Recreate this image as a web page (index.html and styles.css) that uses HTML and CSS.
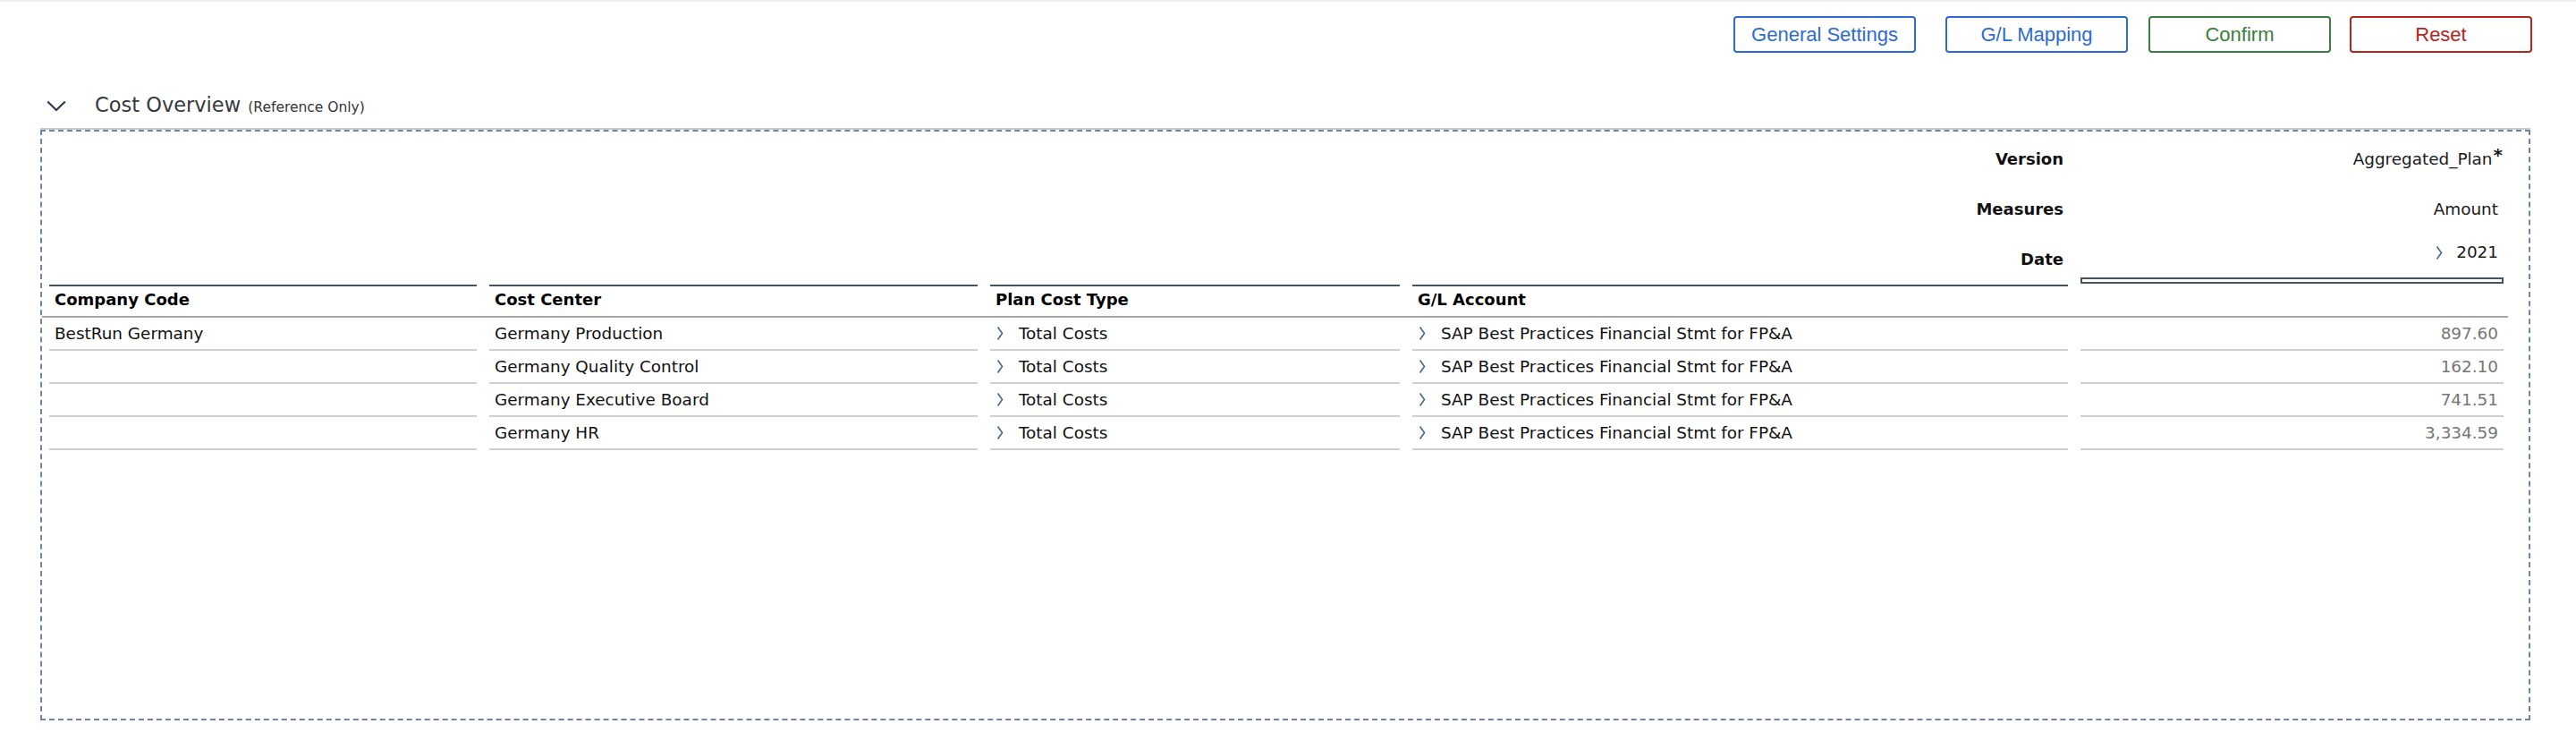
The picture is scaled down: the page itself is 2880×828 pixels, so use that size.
FILE: index.html
```html
<!DOCTYPE html>
<html lang="en">
<head>
<meta charset="utf-8">
<title>Cost Overview</title>
<link rel="stylesheet" href="styles.css">
</head>
<body>
<div class="topbar"></div>
<div class="toolbar">
  <button class="btn btn-blue">General Settings</button>
  <button class="btn btn-blue btn-gl">G/L Mapping</button>
  <button class="btn btn-green btn-confirm">Confirm</button>
  <button class="btn btn-red btn-reset">Reset</button>
</div>
<div class="titlebar">
  <svg class="collapse" width="22" height="13" viewBox="0 0 22 13"><polyline points="1.2,1.5 11,11 20.8,1.5" fill="none" stroke="#2f3b4c" stroke-width="2.2"/></svg>
  <div class="title">Cost Overview <span class="subtitle">(Reference Only)</span></div>
</div>
<div class="section">
  <div class="frame">
    <div class="grid">
      <div class="dimlabel">Version</div>
      <div class="dimvalue">Aggregated_Plan<span class="star">*</span></div>

      <div class="dimlabel">Measures</div>
      <div class="dimvalue">Amount</div>

      <div class="dimlabel">Date</div>
      <div class="datevalue">
        <div class="dateline"><svg class="chev" width="8" height="17" viewBox="0 0 8 17"><polyline points="1.5,1.5 6.5,8.5 1.5,15.5" fill="none" stroke="#46688f" stroke-width="1.6"/></svg><span class="year">2021</span></div>
        <div class="colbox"></div>
      </div>

      <div class="hcell">Company Code</div>
      <div class="hcell">Cost Center</div>
      <div class="hcell">Plan Cost Type</div>
      <div class="hcell">G/L Account</div>
      <div class="hcell hcell-empty"></div>
      <div class="hline"></div>

      <div class="cell">BestRun Germany</div>
      <div class="cell">Germany Production</div>
      <div class="cell"><svg class="chev" width="8" height="17" viewBox="0 0 8 17"><polyline points="1.5,1.5 6.5,8.5 1.5,15.5" fill="none" stroke="#46688f" stroke-width="1.6"/></svg>Total Costs</div>
      <div class="cell"><svg class="chev" width="8" height="17" viewBox="0 0 8 17"><polyline points="1.5,1.5 6.5,8.5 1.5,15.5" fill="none" stroke="#46688f" stroke-width="1.6"/></svg>SAP Best Practices Financial Stmt for FP&amp;A</div>
      <div class="cell num">897.60</div>

      <div class="cell"></div>
      <div class="cell">Germany Quality Control</div>
      <div class="cell"><svg class="chev" width="8" height="17" viewBox="0 0 8 17"><polyline points="1.5,1.5 6.5,8.5 1.5,15.5" fill="none" stroke="#46688f" stroke-width="1.6"/></svg>Total Costs</div>
      <div class="cell"><svg class="chev" width="8" height="17" viewBox="0 0 8 17"><polyline points="1.5,1.5 6.5,8.5 1.5,15.5" fill="none" stroke="#46688f" stroke-width="1.6"/></svg>SAP Best Practices Financial Stmt for FP&amp;A</div>
      <div class="cell num">162.10</div>

      <div class="cell"></div>
      <div class="cell">Germany Executive Board</div>
      <div class="cell"><svg class="chev" width="8" height="17" viewBox="0 0 8 17"><polyline points="1.5,1.5 6.5,8.5 1.5,15.5" fill="none" stroke="#46688f" stroke-width="1.6"/></svg>Total Costs</div>
      <div class="cell"><svg class="chev" width="8" height="17" viewBox="0 0 8 17"><polyline points="1.5,1.5 6.5,8.5 1.5,15.5" fill="none" stroke="#46688f" stroke-width="1.6"/></svg>SAP Best Practices Financial Stmt for FP&amp;A</div>
      <div class="cell num">741.51</div>

      <div class="cell"></div>
      <div class="cell">Germany HR</div>
      <div class="cell"><svg class="chev" width="8" height="17" viewBox="0 0 8 17"><polyline points="1.5,1.5 6.5,8.5 1.5,15.5" fill="none" stroke="#46688f" stroke-width="1.6"/></svg>Total Costs</div>
      <div class="cell"><svg class="chev" width="8" height="17" viewBox="0 0 8 17"><polyline points="1.5,1.5 6.5,8.5 1.5,15.5" fill="none" stroke="#46688f" stroke-width="1.6"/></svg>SAP Best Practices Financial Stmt for FP&amp;A</div>
      <div class="cell num">3,334.59</div>
    </div>
  </div>
</div>
</body>
</html>
```
FILE: styles.css
```css
* { box-sizing: border-box; }

html, body {
  margin: 0;
  padding: 0;
  background: #ffffff;
}

body {
  font-family: "DejaVu Sans", "Liberation Sans", sans-serif;
  color: #1a1a1a;
  width: 2880px;
  height: 828px;
  overflow: hidden;
}

.topbar {
  height: 2px;
  background: #f0f0f0;
}

.toolbar {
  display: flex;
  justify-content: flex-end;
  padding: 16px 49px 0 0;
}

.btn {
  width: 204px;
  height: 41px;
  padding: 0;
  border: 2px solid;
  border-radius: 4px;
  background: #ffffff;
  font-family: "Liberation Sans", Arial, sans-serif;
  font-size: 22px;
  line-height: 1;
  cursor: pointer;
}

.btn-blue { color: #2e6bcf; border-color: #2e6bcf; }
.btn-green { color: #3b7d41; border-color: #3b7d41; }
.btn-red { color: #b3261e; border-color: #b3261e; }

.btn-gl { margin-left: 33px; }
.btn-confirm { margin-left: 23px; }
.btn-reset { margin-left: 21px; }

.titlebar {
  display: flex;
  align-items: center;
  height: 28px;
  margin-top: 45px;
  padding-left: 52px;
}

.collapse {
  display: block;
  flex: none;
}

.title {
  margin-left: 32px;
  font-size: 22.5px;
  line-height: 28px;
  color: #35383d;
  white-space: nowrap;
}

.subtitle {
  margin-left: 1px;
  font-size: 15.5px;
  color: #32363a;
}

.section {
  margin: 11px 0 0 45px;
  width: 2784px;
  border-top: 2px solid #cbcbcb;
}

.frame {
  height: 660px;
  border: 2px dashed #6a86ab;
  padding: 3px 0 0 8px;
}

.grid {
  display: grid;
  grid-template-columns: 478px 546px 458px 733px 473px;
  column-gap: 14px;
  font-size: 18.4px;
  line-height: 22px;
}

.dimlabel {
  grid-column: 1 / 5;
  height: 56px;
  display: flex;
  align-items: center;
  justify-content: flex-end;
  padding-right: 5px;
  font-size: 18px;
  font-weight: bold;
  color: #111111;
}

.dimvalue {
  height: 56px;
  display: flex;
  align-items: center;
  justify-content: flex-end;
  padding-right: 6px;
  color: #1a1a1a;
}

.star {
  font-weight: bold;
  font-size: 20px;
  line-height: 10px;
  margin-left: 1px;
  margin-right: -5px;
  align-self: flex-start;
  margin-top: 18px;
}

.datevalue {
  height: 56px;
  padding-top: 9px;
  display: flex;
  flex-direction: column;
}

.dateline {
  display: flex;
  align-items: center;
  justify-content: flex-end;
  padding-right: 6px;
  height: 22px;
}

.dateline .chev {
  margin-right: 15px;
}

.colbox {
  margin-top: 17px;
  height: 7px;
  border: 2px solid #475362;
}

.hcell {
  height: 35px;
  border-top: 2px solid #475362;
  display: flex;
  align-items: center;
  padding: 0 0 3px 6px;
  font-size: 18px;
  font-weight: bold;
  color: #000000;
}

.hcell-empty {
  border-top: none;
}

.hline {
  grid-column: 1 / -1;
  height: 2px;
  margin: 0 -5px 0 -8px;
  background: #a6a6a6;
}

.cell {
  height: 37px;
  border-bottom: 2px solid #cfcfcf;
  display: flex;
  align-items: center;
  padding-left: 6px;
  white-space: nowrap;
  color: #111111;
}

.cell .chev {
  flex: none;
  margin-left: 1px;
  margin-right: 17px;
}

.chev {
  display: block;
}

.num {
  justify-content: flex-end;
  padding: 0 6px 0 0;
  color: #767676;
}
```
